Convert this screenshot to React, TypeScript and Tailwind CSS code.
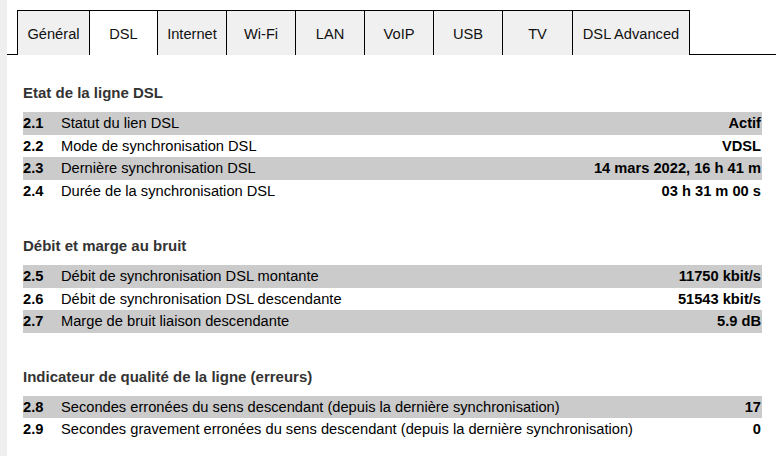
const tabs = [
  { label: 'Général', w: 'w-[73px]' },
  { label: 'DSL', w: 'w-[68px]', active: true },
  { label: 'Internet', w: 'w-[69px]' },
  { label: 'Wi-Fi', w: 'w-[69px]' },
  { label: 'LAN', w: 'w-[69px]' },
  { label: 'VoIP', w: 'w-[69px]' },
  { label: 'USB', w: 'w-[69px]' },
  { label: 'TV', w: 'w-[70px]' },
  { label: 'DSL Advanced', w: 'w-[117px]' },
]

type Row = { n: string; label: string; value: string }

const sections: { title: string; rows: Row[] }[] = [
  {
    title: 'Etat de la ligne DSL',
    rows: [
      { n: '2.1', label: 'Statut du lien DSL', value: 'Actif' },
      { n: '2.2', label: 'Mode de synchronisation DSL', value: 'VDSL' },
      { n: '2.3', label: 'Dernière synchronisation DSL', value: '14 mars 2022, 16 h 41 m' },
      { n: '2.4', label: 'Durée de la synchronisation DSL', value: '03 h 31 m 00 s' },
    ],
  },
  {
    title: 'Débit et marge au bruit',
    rows: [
      { n: '2.5', label: 'Débit de synchronisation DSL montante', value: '11750 kbit/s' },
      { n: '2.6', label: 'Débit de synchronisation DSL descendante', value: '51543 kbit/s' },
      { n: '2.7', label: 'Marge de bruit liaison descendante', value: '5.9 dB' },
    ],
  },
  {
    title: 'Indicateur de qualité de la ligne (erreurs)',
    rows: [
      { n: '2.8', label: 'Secondes erronées du sens descendant (depuis la dernière synchronisation)', value: '17' },
      { n: '2.9', label: 'Secondes gravement erronées du sens descendant (depuis la dernière synchronisation)', value: '0' },
    ],
  },
]

export default function App() {
  return (
    <div
      className="flex w-[776px] h-[456px] overflow-hidden bg-white text-[14.67px] text-black"
      style={{ fontFamily: '"Liberation Sans", Arial, sans-serif' }}
    >
      <div className="w-[7px] shrink-0 bg-[#efefef]" />
      <div className="flex-1 flex flex-col pt-[10px]">
        <div className="flex items-stretch h-[45px]">
          <div className="w-[10px] border-b border-black" />
          {tabs.map((t, i) => (
            <div
              key={t.label}
              className={`${t.w} shrink-0 flex items-center justify-center pt-[1px] border-t border-r border-black ${i === 0 ? 'border-l' : ''} ${t.active ? 'bg-white' : 'bg-[#f0f0f0]'} text-[#111]`}
            >
              {t.label}
            </div>
          ))}
          <div className="flex-1 border-b border-black" />
        </div>

        <div className="pl-[16px] pr-[14px]">
          {sections.map((s, si) => (
            <div key={s.title} className={si === 0 ? 'mt-[28px]' : 'mt-[34px]'}>
              <div className="h-[20px] leading-[20px] text-[15px] font-bold text-[#333] mb-[9px]">{s.title}</div>
              {s.rows.map((r, ri) => (
                <div
                  key={r.n}
                  className={`flex items-center h-[22.5px] ${ri % 2 === 0 ? 'bg-[#cbcbcb]' : ''}`}
                >
                  <span className="w-[38px] shrink-0 font-bold">{r.n}</span>
                  <span className="flex-1 whitespace-nowrap">{r.label}</span>
                  <span className="font-bold pr-[1px] whitespace-nowrap">{r.value}</span>
                </div>
              ))}
            </div>
          ))}
        </div>
      </div>
    </div>
  )
}
